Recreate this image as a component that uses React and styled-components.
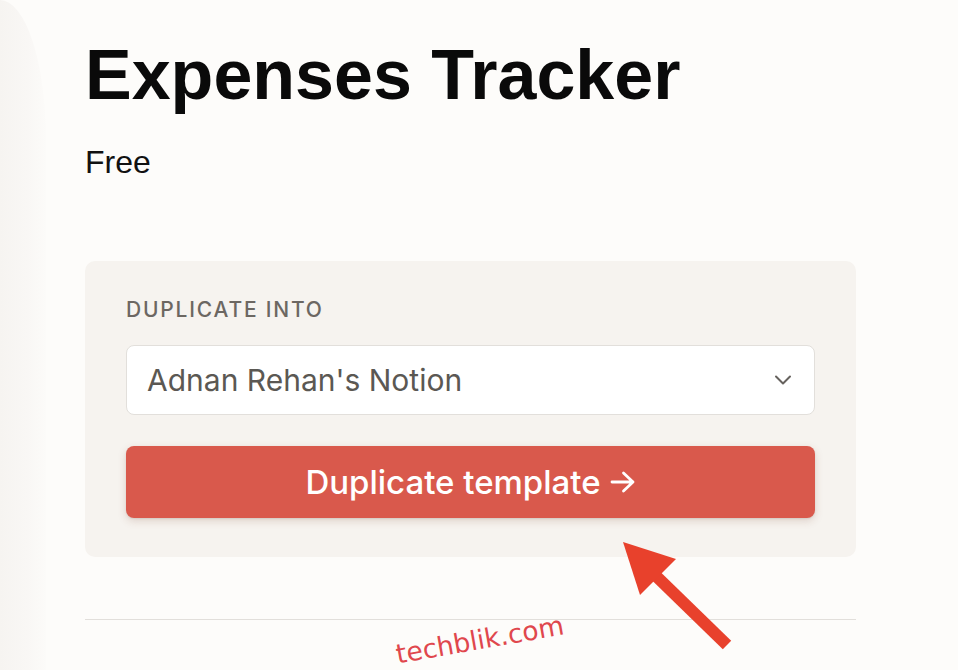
import React from "react";
import styled, { createGlobalStyle } from "styled-components";

const Global = createGlobalStyle`
  html, body { margin: 0; padding: 0; background: #fdfcfa; }
  body { width: 958px; height: 670px; overflow: hidden; font-family: Inter, "Liberation Sans", sans-serif; }
`;

const Page = styled.div`
  position: relative;
  display: flex;
  width: 958px;
  height: 670px;
  background: #fdfcfa;
`;

const Edge = styled.div`
  width: 46px;
  flex: none;
  background: linear-gradient(to right, #f6f4f1 0%, #f9f7f5 60%, #fcfbf9 100%);
  border-top-right-radius: 46px 140px;
`;

const Main = styled.main`
  flex: none;
  box-sizing: border-box;
  width: 810px;
  padding-left: 39px;
  padding-top: 33px;
  display: flex;
  flex-direction: column;
`;

const Title = styled.h1`
  margin: 0;
  font-family: "Liberation Sans", Arial, sans-serif;
  font-weight: 700;
  font-size: 70px;
  line-height: 84px;
  color: #0a0a0a;
  white-space: nowrap;
`;

const Price = styled.div`
  margin-top: 27px;
  font-family: "Liberation Sans", Arial, sans-serif;
  font-size: 32px;
  line-height: 36px;
  color: #111;
`;

const Card = styled.section`
  margin-top: 81px;
  background: #f6f3ef;
  border-radius: 10px;
  padding: 37px 41px 39px;
  display: flex;
  flex-direction: column;
`;

const Label = styled.div`
  font-size: 21px;
  line-height: 24px;
  font-weight: 500;
  letter-spacing: 1.8px;
  color: #6c6762;
`;

const Select = styled.div`
  margin-top: 23px;
  height: 70px;
  box-sizing: border-box;
  background: #fff;
  border: 1.5px solid #e2dfdb;
  border-radius: 8px;
  display: flex;
  align-items: center;
  justify-content: space-between;
  padding: 0 22px 0 20px;
  font-size: 30px;
  color: #5b5853;
`;

const Button = styled.button`
  margin-top: 31px;
  height: 72px;
  border: none;
  border-radius: 8px;
  background: #d9594c;
  color: #fff;
  font-family: Inter, "Liberation Sans", sans-serif;
  font-size: 33px;
  font-weight: 500;
  display: flex;
  align-items: center;
  justify-content: center;
  gap: 9px;
  box-shadow: 0 3px 8px rgba(120, 60, 40, 0.18), 0 1px 2px rgba(0,0,0,0.08);
  cursor: pointer;
`;

const Divider = styled.hr`
  margin: 62px 0 0;
  border: none;
  border-top: 1.5px solid #e2dfdb;
`;

const ArrowMark = styled.svg`
  position: absolute;
  left: 600px;
  top: 530px;
  width: 150px;
  height: 140px;
  pointer-events: none;
`;

const Watermark = styled.div`
  position: absolute;
  left: 395px;
  top: 625px;
  font-family: "DejaVu Sans", Verdana, sans-serif;
  font-size: 26.5px;
  line-height: 30px;
  color: #e0474d;
  transform: rotate(-10deg);
  white-space: nowrap;
`;

const Chevron = () => (
  <svg width="18" height="12" viewBox="0 0 18 12" fill="none">
    <path d="M2 2.5 L9 9.5 L16 2.5" stroke="#66625e" strokeWidth="2" strokeLinecap="round" strokeLinejoin="round" />
  </svg>
);

const ArrowRight = () => (
  <svg width="26" height="24" viewBox="0 0 26 24" fill="none">
    <path d="M2 12 H23 M13.5 3 L23 12 L13.5 21" stroke="#fff" strokeWidth="2.8" strokeLinecap="round" strokeLinejoin="round" />
  </svg>
);

export default function App() {
  return (
    <>
      <Global />
      <Page>
        <Edge />
        <Main>
          <Title>Expenses Tracker</Title>
          <Price>Free</Price>
          <Card>
            <Label>DUPLICATE INTO</Label>
            <Select>
              <span>Adnan Rehan's Notion</span>
              <Chevron />
            </Select>
            <Button>
              <span>Duplicate template</span>
              <ArrowRight />
            </Button>
          </Card>
          <Divider />
        </Main>
        <ArrowMark viewBox="0 0 150 140">
          <line x1="55" y1="45" x2="127" y2="115" stroke="#e8412c" strokeWidth="12" />
          <polygon points="23,12 76,29 40,65" fill="#e8412c" />
        </ArrowMark>
        <Watermark>techblik.com</Watermark>
      </Page>
    </>
  );
}
